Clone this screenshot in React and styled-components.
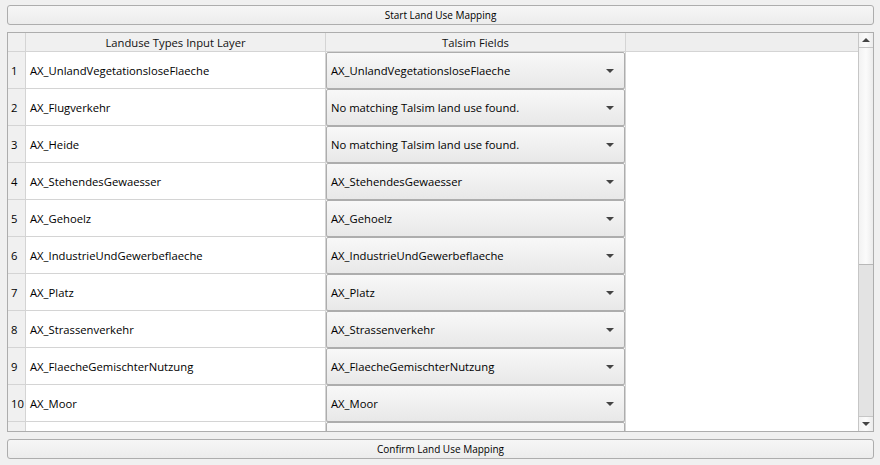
import React from "react";
import styled, { createGlobalStyle } from "styled-components";

const GlobalStyle = createGlobalStyle`
  html, body {
    margin: 0;
    padding: 0;
    background: #f0f0f0;
    font-family: "Segoe UI", "Open Sans", "Liberation Sans", sans-serif;
    font-size: 11.25px;
    color: #000;
  }
`;

const rows = [
  ["AX_UnlandVegetationsloseFlaeche", "AX_UnlandVegetationsloseFlaeche"],
  ["AX_Flugverkehr", "No matching Talsim land use found."],
  ["AX_Heide", "No matching Talsim land use found."],
  ["AX_StehendesGewaesser", "AX_StehendesGewaesser"],
  ["AX_Gehoelz", "AX_Gehoelz"],
  ["AX_IndustrieUndGewerbeflaeche", "AX_IndustrieUndGewerbeflaeche"],
  ["AX_Platz", "AX_Platz"],
  ["AX_Strassenverkehr", "AX_Strassenverkehr"],
  ["AX_FlaecheGemischterNutzung", "AX_FlaecheGemischterNutzung"],
  ["AX_Moor", "AX_Moor"],
  ["", ""],
];

export default function App() {
  return (
    <Page>
      <GlobalStyle />
      <PushButton>Start Land Use Mapping</PushButton>
      <TableFrame>
        <Viewport>
          <HeaderRow>
            <Corner />
            <HeaderCell>Landuse Types Input Layer</HeaderCell>
            <HeaderCell>Talsim Fields</HeaderCell>
            <HeaderFill />
          </HeaderRow>
          {rows.map(([name, field], i) => (
            <Row key={i}>
              <RowNumber>{name ? i + 1 : ""}</RowNumber>
              <Cell>{name}</Cell>
              <ComboCell>
                <Combo>
                  <span>{field}</span>
                  <Arrow />
                </Combo>
              </ComboCell>
            </Row>
          ))}
        </Viewport>
        <ScrollBar>
          <ScrollButton>
            <Triangle $up />
          </ScrollButton>
          <Handle />
          <Track />
          <ScrollButton $bottom>
            <Triangle />
          </ScrollButton>
        </ScrollBar>
      </TableFrame>
      <PushButton>Confirm Land Use Mapping</PushButton>
    </Page>
  );
}

const Page = styled.div`
  height: 465px;
  box-sizing: border-box;
  padding: 5px 6px 6px 7px;
  display: flex;
  flex-direction: column;
  gap: 7px;
`;

const PushButton = styled.button`
  height: 20px;
  flex: none;
  border: 1px solid #adadad;
  border-radius: 3px;
  background: linear-gradient(#f6f6f6, #ececec);
  font-family: "Segoe UI", "Open Sans", "Liberation Sans", sans-serif;
  font-size: 10px;
  color: #000;
  padding: 0;
`;

const TableFrame = styled.div`
  flex: 1;
  min-height: 0;
  border: 1px solid #adadad;
  background: #fff;
  display: grid;
  grid-template-columns: 1fr 15px;
`;

const Viewport = styled.div`
  overflow: hidden;
`;

const HeaderRow = styled.div`
  display: grid;
  grid-template-columns: 18px 300px 300px 1fr;
  height: 18px;
  background: #f0f0f0;
  border-bottom: 1px solid #d4d4d4;
`;

const Corner = styled.div`
  border-right: 1px solid #d4d4d4;
`;

const HeaderCell = styled.div`
  display: flex;
  align-items: center;
  justify-content: center;
  border-right: 1px solid #d4d4d4;
  color: #111;
`;

const HeaderFill = styled.div`
  background: #eeeeee;
`;

const Row = styled.div`
  display: grid;
  grid-template-columns: 18px 300px 300px;
  height: 37px;
`;

const RowNumber = styled.div`
  background: #f0f0f0;
  border-right: 1px solid #d4d4d4;
  border-bottom: 1px solid #d4d4d4;
  display: flex;
  align-items: center;
  padding-left: 3px;
`;

const Cell = styled.div`
  display: flex;
  align-items: center;
  padding-left: 4px;
  border-right: 1px solid #d4d4d4;
  border-bottom: 1px solid #d4d4d4;
`;

const ComboCell = styled.div`
  border-right: 1px solid #d4d4d4;
  border-bottom: 1px solid #d4d4d4;
  display: flex;
`;

const Combo = styled.div`
  flex: 1;
  margin: 0 0 -1px 0;
  border: 1px solid #adadad;
  border-radius: 2px;
  background: linear-gradient(#f8f8f8, #e8e8e8);
  display: flex;
  align-items: center;
  justify-content: space-between;
  padding: 0 10px 0 4px;
`;

const Arrow = styled.div`
  width: 0;
  height: 0;
  border-left: 4px solid transparent;
  border-right: 4px solid transparent;
  border-top: 4px solid #444;
`;

const ScrollBar = styled.div`
  display: flex;
  flex-direction: column;
  border-left: 1px solid #c6c6c6;
  background: #e6e6e6;
`;

const ScrollButton = styled.div`
  height: 14px;
  flex: none;
  display: flex;
  align-items: center;
  justify-content: center;
  background: linear-gradient(90deg, #f2f2f2, #fbfbfb, #ececec);
  border-bottom: ${(p) => (p.$bottom ? "none" : "1px solid #c6c6c6")};
  border-top: ${(p) => (p.$bottom ? "1px solid #c6c6c6" : "none")};
`;

const Triangle = styled.div`
  width: 0;
  height: 0;
  border-left: 4px solid transparent;
  border-right: 4px solid transparent;
  ${(p) =>
    p.$up ? "border-bottom: 4px solid #444;" : "border-top: 4px solid #444;"}
`;

const Handle = styled.div`
  height: 217px;
  flex: none;
  box-sizing: border-box;
  background: linear-gradient(90deg, #f2f2f2, #fbfbfb, #ececec);
  border-bottom: 1px solid #b8b8b8;
`;

const Track = styled.div`
  flex: 1;
  background: #e3e3e3;
`;
